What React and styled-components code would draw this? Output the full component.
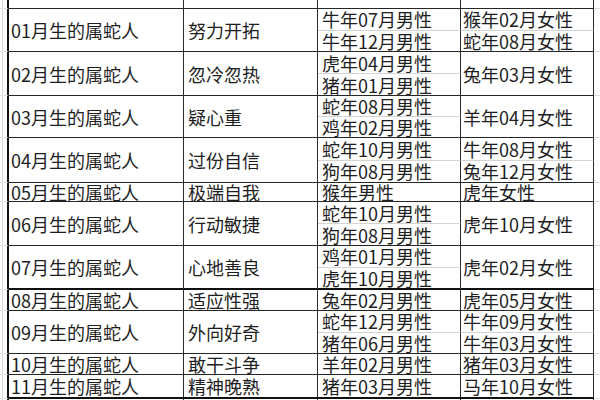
import React from "react";
import styled, { createGlobalStyle } from "styled-components";

const GlobalStyle = createGlobalStyle`
    html, body {
        margin: 0;
        padding: 0;
        background: #fff;
    }
    body {
        width: 600px;
        height: 400px;
        overflow: hidden;
        font-family: "Noto Sans CJK SC", "Liberation Sans", sans-serif;
    }
`

// rows of the sheet: cols 1-2 are merged over the sub rows of each record
const records = [
    { month: "01", trait: "努力开拓", male: ["牛年07月男性", "牛年12月男性"], female: ["猴年02月女性", "蛇年08月女性"], rows: [21.5, 21.5] },
    { month: "02", trait: "忽冷忽热", male: ["虎年04月男性", "猪年01月男性"], female: ["兔年03月女性"], rows: [22, 22] },
    { month: "03", trait: "疑心重", male: ["蛇年08月男性", "鸡年02月男性"], female: ["羊年04月女性"], rows: [21, 21] },
    { month: "04", trait: "过份自信", male: ["蛇年10月男性", "狗年08月男性"], female: ["牛年08月女性", "兔年12月女性"], rows: [22.5, 22.5] },
    { month: "05", trait: "极端自我", male: ["猴年男性"], female: ["虎年女性"], rows: [19] },
    { month: "06", trait: "行动敏捷", male: ["蛇年10月男性", "狗年08月男性"], female: ["虎年10月女性"], rows: [22, 22] },
    { month: "07", trait: "心地善良", male: ["鸡年01月男性", "虎年10月男性"], female: ["虎年02月女性"], rows: [21.75, 21.75], line: "thick" },
    { month: "08", trait: "适应性强", male: ["兔年02月男性"], female: ["虎年05月女性"], rows: [21.5] },
    { month: "09", trait: "外向好奇", male: ["蛇年12月男性", "猪年06月男性"], female: ["牛年09月女性", "牛年03月女性"], rows: [21.5, 21.5] },
    { month: "10", trait: "敢干斗争", male: ["羊年02月男性"], female: ["猪年03月女性"], rows: [21] },
    { month: "11", trait: "精神晚熟", male: ["猪年03月男性"], female: ["马年10月女性"], rows: [23.5], line: "thick" },
];

const borders = {
    none: "none",
    minor: "1px solid #d4d4d4",
    major: "1.5px solid #262626",
    thick: "2.5px solid #111",
};

const Sheet = styled.div`
    display: grid;
    grid-template-columns: 9px 175px 134px 143px 133px 6px;
    grid-template-rows: ${p => p.$rows};
    width: 600px;
    height: 400px;
    overflow: hidden;
    color: #1e1e1e;
`

const Cell = styled.div`
    box-sizing: border-box;
    grid-row: span ${p => p.$span || 1};
    display: flex;
    align-items: center;
    min-width: 0;
    overflow: hidden;
    white-space: nowrap;
    font-size: 18px;
    line-height: 1;
    border-right: 1.5px solid #2b2b2b;
    border-bottom: ${p => borders[p.$line || "major"]};
`

const LeftGutter = styled(Cell)`
    border-right: 2px solid #111;
    border-bottom: 1px solid #e2e2e2;
    background: linear-gradient(to right, transparent 2px, #d6d6d6 2px, #d6d6d6 3px, transparent 3px);
`

const RightGutter = styled(Cell)`
    border-right: none;
    border-bottom: 1px solid #dcdcdc;
`

const NameCell = styled(Cell)`
    padding-left: 2px;
`

const TraitCell = styled(Cell)`
    padding-left: 4px;
`

const MaleCell = styled(Cell)`
    padding-left: 4px;
`

const FemaleCell = styled(Cell)`
    padding-left: 2px;
`

const Record = ({ record }) => {
    const span = record.rows.length;
    const end = record.line || "major";
    const femaleSpan = record.female.length === 1 ? span : 1;
    return (
        <>
            <LeftGutter $span={span} />
            <NameCell $span={span} $line={end}>{record.month}月生的属蛇人</NameCell>
            <TraitCell $span={span} $line={end}>{record.trait}</TraitCell>
            <MaleCell $line={span > 1 ? "minor" : end}>{record.male[0]}</MaleCell>
            <FemaleCell $span={femaleSpan} $line={span > 1 && femaleSpan === 1 ? "minor" : end}>{record.female[0]}</FemaleCell>
            <RightGutter $span={span} />
            {span > 1 && <MaleCell $line={end}>{record.male[1]}</MaleCell>}
            {record.female[1] && <FemaleCell $line={end}>{record.female[1]}</FemaleCell>}
        </>
    );
};

const EmptyRow = ({ line }) => (
    <>
        <LeftGutter />
        <Cell $line={line} />
        <Cell $line={line} />
        <Cell $line={line} />
        <Cell $line={line} />
        <RightGutter />
    </>
);

const App = () => {
    const heights = ["9px"];
    records.forEach(r => r.rows.forEach(h => heights.push(`${h}px`)));
    heights.push("22px");

    return (
        <>
            <GlobalStyle />
            <Sheet $rows={heights.join(" ")}>
                <EmptyRow line="major" />
                {records.map(r => <Record key={r.month} record={r} />)}
                <EmptyRow line="major" />
            </Sheet>
        </>
    );
};

export default App;
